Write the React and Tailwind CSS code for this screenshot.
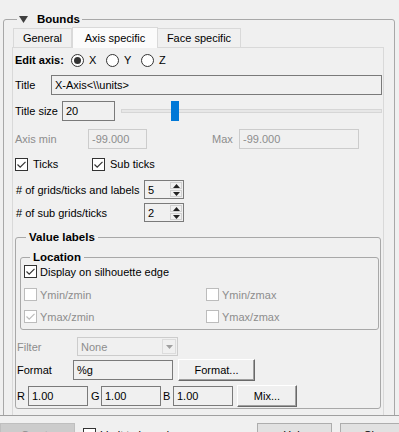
import React from "react"

const Check = ({ checked, disabled, className = "" }) => (
  <span
    className={`w-[13px] h-[13px] shrink-0 border bg-white flex items-center justify-center ${
      disabled ? "border-[#bcbcbc]" : "border-[#333333]"
    } ${className}`}
  >
    {checked && (
      <svg viewBox="0 0 11 11" className="w-[11px] h-[11px]">
        <path d="M1.5 5.5 L4.2 8.2 L9.5 2.8" fill="none" stroke={disabled ? "#bcbcbc" : "#333333"} strokeWidth="1.2" />
      </svg>
    )}
  </span>
)

const Radio = ({ checked }) => (
  <span className="w-[13px] h-[13px] shrink-0 rounded-full border border-[#333333] bg-white flex items-center justify-center">
    {checked && <span className="w-[7px] h-[7px] rounded-full bg-[#333333]" />}
  </span>
)

const Field = ({ value, disabled, className = "" }) => (
  <div
    className={`h-full flex items-center px-[3px] border bg-[#f0f0f0] ${
      disabled ? "border-[#cccccc] text-[#8d8d8d]" : "border-[#7a7a7a]"
    } ${className}`}
  >
    {value}
  </div>
)

const Spin = ({ value }) => (
  <div className="w-[40px] h-[19px] border border-[#7a7a7a] flex items-stretch">
    <span className="flex-1 flex items-center pl-[3px]">{value}</span>
    <div className="w-[12px] flex flex-col my-[1px] mr-[1px] gap-[1px]">
      <span className="flex-1 border border-[#d0d0d0] flex items-center justify-center">
        <svg viewBox="0 0 7 4" className="w-[7px] h-[4px]"><path d="M0 4 L3.5 0 L7 4 Z" fill="#222" /></svg>
      </span>
      <span className="flex-1 border border-[#d0d0d0] flex items-center justify-center">
        <svg viewBox="0 0 7 4" className="w-[7px] h-[4px]"><path d="M0 0 L7 0 L3.5 4 Z" fill="#222" /></svg>
      </span>
    </div>
  </div>
)

const ClassicButton = ({ children, className = "" }) => (
  <div
    className={`h-full flex items-center justify-center border-t border-l border-t-white border-l-white border-r border-b border-r-[#696969] border-b-[#696969] shadow-[inset_-1px_-1px_0_#a0a0a0] bg-[#f0f0f0] ${className}`}
  >
    {children}
  </div>
)

export default function App() {
  return (
    <div className="w-[399px] h-[432px] bg-[#f0f0f0] overflow-hidden text-[11px] leading-[14px] text-black font-['Liberation_Sans',Arial,sans-serif]">
      {/* scroll area */}
      <div className="h-[416px] overflow-hidden border-b border-[#a0a0a0]">
        <div className="pt-[12px] pl-[3px] pr-[4px]">
          <fieldset className="border border-[#a8a8a8] rounded-[3px] min-w-0">
            <legend className="ml-[13px] px-[2px] flex items-center h-[14px]">
              <svg viewBox="0 0 9 7" className="w-[9px] h-[7px] mr-[9px]">
                <path d="M0 0 L9 0 L4.5 7 Z" fill="#404040" />
              </svg>
              <span className="font-bold text-[11.5px]">Bounds</span>
            </legend>

            <div className="ml-[8px] mr-[10px]">
              {/* tabs */}
              <div className="flex items-end h-[21px] pl-[1px]">
                <div className="w-[59px] h-[19px] border border-b-0 border-[#d9d9d9] flex items-center justify-center">
                  General
                </div>
                <div className="w-[86px] h-[21px] border border-b-0 border-[#d9d9d9] bg-[#fbfbfb] flex items-center justify-center relative top-[1px]">
                  Axis specific
                </div>
                <div className="w-[83px] h-[19px] border border-b-0 border-l-0 border-[#d9d9d9] flex items-center justify-center">
                  Face specific
                </div>
              </div>

              {/* pane */}
              <div className="border border-[#d9d9d9] pl-[1px] pr-[1px] pb-[20px]">
                <div className="mt-[2px] h-[20px] flex items-center">
                  <span className="font-bold ml-[1px] w-[56px]">Edit axis:</span>
                  <Radio checked />
                  <span className="ml-[5px] w-[17px]">X</span>
                  <Radio />
                  <span className="ml-[5px] w-[17px]">Y</span>
                  <Radio />
                  <span className="ml-[5px]">Z</span>
                </div>

                <div className="mt-[5px] h-[20px] flex items-center">
                  <span className="w-[37px] pl-[1px]">Title</span>
                  <Field value="X-Axis<\\units>" className="flex-1" />
                </div>

                <div className="mt-[6px] h-[20px] flex items-center">
                  <span className="w-[48px] pl-[1px]">Title size</span>
                  <Field value="20" className="w-[53px]" />
                  <div className="flex-1 ml-[6px] h-full relative flex items-center">
                    <div className="w-full h-[4px] border border-[#d6d6d6] bg-[#e7e7e7]" />
                    <div className="absolute left-[50px] top-0 w-[8px] h-[20px] bg-[#0078d7]" />
                  </div>
                </div>

                <div className="mt-[8px] h-[20px] flex items-center text-[#8d8d8d]">
                  <span className="w-[74px] pl-[1px]">Axis min</span>
                  <Field value="-99.000" disabled className="w-[59px]" />
                  <span className="ml-[65px] w-[27px]">Max</span>
                  <Field value="-99.000" disabled className="w-[120px]" />
                </div>

                <div className="mt-[7px] h-[16px] flex items-center">
                  <Check checked className="ml-[1px]" />
                  <span className="ml-[5px] w-[59px]">Ticks</span>
                  <Check checked />
                  <span className="ml-[5px]">Sub ticks</span>
                </div>

                <div className="mt-[8px] h-[19px] flex items-center">
                  <span className="w-[130px] pl-[2px]">
                    # of grids/ticks and labels
                  </span>
                  <Spin value="5" />
                </div>

                <div className="mt-[4px] h-[19px] flex items-center">
                  <span className="w-[130px] pl-[2px]"># of sub grids/ticks</span>
                  <Spin value="2" />
                </div>

                {/* value labels */}
                <fieldset className="mt-[8px] ml-[1px] mr-[1px] border border-[#a8a8a8] rounded-[3px] min-w-0 pb-[1px]">
                  <legend className="ml-[10px] px-[3px] h-[14px] font-bold text-[11.5px] leading-[14px]">
                    Value labels
                  </legend>

                  <fieldset className="mt-[6px] ml-[4px] mr-[1px] border border-[#a8a8a8] rounded-[3px] min-w-0 pb-[5px]">
                    <legend className="ml-[9px] px-[3px] h-[14px] font-bold text-[11.5px] leading-[14px]">
                      Location
                    </legend>
                    <div className="h-[15px] flex items-center pl-[3px]">
                      <Check checked />
                      <span className="ml-[3px]">Display on silhouette edge</span>
                    </div>
                    <div className="mt-[8px] h-[15px] flex items-center pl-[3px] text-[#8d8d8d]">
                      <Check disabled />
                      <span className="ml-[3px] w-[166px]">Ymin/zmin</span>
                      <Check disabled />
                      <span className="ml-[3px]">Ymin/zmax</span>
                    </div>
                    <div className="mt-[7px] h-[15px] flex items-center pl-[3px] text-[#8d8d8d]">
                      <Check checked disabled />
                      <span className="ml-[3px] w-[166px]">Ymax/zmin</span>
                      <Check disabled />
                      <span className="ml-[3px]">Ymax/zmax</span>
                    </div>
                  </fieldset>

                  <div className="mt-[7px] h-[19px] flex items-center text-[#8d8d8d]">
                    <span className="w-[61px] pl-[1px]">Filter</span>
                    <div className="w-[101px] h-full border border-[#cccccc] flex items-center pl-[3px]">
                      <span className="flex-1">None</span>
                      <span className="w-[14px] h-[15px] mr-[1px] border border-[#dcdcdc] flex items-center justify-center">
                        <svg viewBox="0 0 7 4" className="w-[7px] h-[4px]"><path d="M0 0 L7 0 L3.5 4 Z" fill="#a0a0a0" /></svg>
                      </span>
                    </div>
                  </div>

                  <div className="mt-[3px] h-[22px] flex items-center">
                    <span className="w-[57px] pl-[1px]">Format</span>
                    <Field value="%g" className="w-[100px] !h-[20px]" />
                    <ClassicButton className="ml-[5px] w-[77px]">Format...</ClassicButton>
                  </div>

                  <div className="mt-[4px] h-[22px] flex items-center">
                    <span className="w-[12px] pl-[1px]">R</span>
                    <Field value="1.00" className="w-[60px] !h-[20px]" />
                    <span className="w-[13px] pl-[3px]">G</span>
                    <Field value="1.00" className="w-[60px] !h-[20px]" />
                    <span className="w-[12px] pl-[2px]">B</span>
                    <Field value="1.00" className="w-[60px] !h-[20px]" />
                    <ClassicButton className="ml-[4px] w-[60px]">Mix...</ClassicButton>
                  </div>
                </fieldset>
              </div>
            </div>
          </fieldset>
        </div>
      </div>

      {/* bottom buttons */}
      <div className="mt-[7px] h-[23px] flex items-center">
        <div className="w-[75px] h-full bg-[#cccccc] border border-[#bfbfbf] flex items-center justify-center text-[#8d8d8d]">
          Create
        </div>
        <Check className="ml-[8px]" />
        <span className="ml-[4px]">Limit to bounds</span>
        <div className="ml-auto w-[75px] h-full bg-[#e1e1e1] border border-[#adadad] flex items-center justify-center">
          Help
        </div>
        <div className="ml-[8px] w-[75px] -mr-[16px] h-full bg-[#e1e1e1] border border-[#adadad] flex items-center justify-center">
          Close
        </div>
      </div>
    </div>
  )
}
